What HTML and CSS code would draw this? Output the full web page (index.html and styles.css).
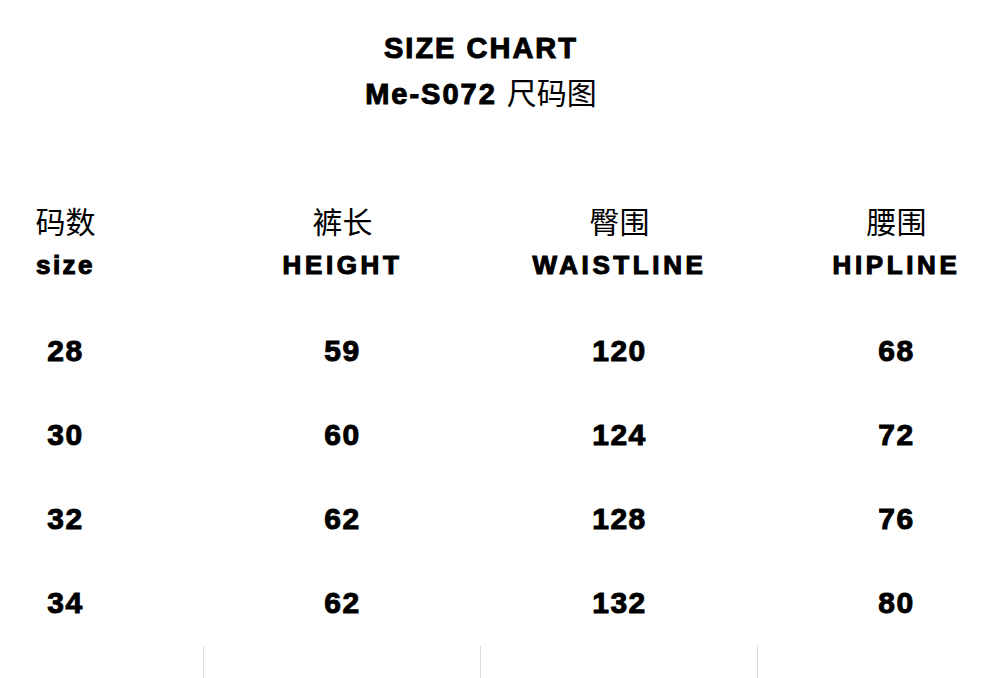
FILE: index.html
```html
<!DOCTYPE html>
<html lang="zh">
<head>
<meta charset="utf-8">
<title>Size Chart</title>
<link rel="stylesheet" href="styles.css">
</head>
<body>
<div class="sheet">
  <header class="title">
    <div class="title-line">SIZE CHART</div>
    <div class="title-line second">Me-S072 <span class="cn">尺码图</span></div>
  </header>
  <div class="grid head">
    <div class="cell"><div class="cn-head">码数</div><div class="en-head small">size</div></div>
    <div class="cell"><div class="cn-head">裤长</div><div class="en-head">HEIGHT</div></div>
    <div class="cell"><div class="cn-head">臀围</div><div class="en-head">WAISTLINE</div></div>
    <div class="cell"><div class="cn-head">腰围</div><div class="en-head">HIPLINE</div></div>
  </div>
  <div class="grid row"><div class="cell">28</div><div class="cell">59</div><div class="cell">120</div><div class="cell">68</div></div>
  <div class="grid row"><div class="cell">30</div><div class="cell">60</div><div class="cell">124</div><div class="cell">72</div></div>
  <div class="grid row"><div class="cell">32</div><div class="cell">62</div><div class="cell">128</div><div class="cell">76</div></div>
  <div class="grid row"><div class="cell">34</div><div class="cell">62</div><div class="cell">132</div><div class="cell">80</div></div>
  <div class="grid foot"><div class="cell line"></div><div class="cell line"></div><div class="cell line"></div><div class="cell"></div></div>
</div>
</body>
</html>
```
FILE: styles.css
```css
html, body {
  margin: 0;
  padding: 0;
  background: #fff;
  overflow: hidden;
}
body {
  font-family: "Liberation Sans", Arial, sans-serif;
  color: #000;
  width: 988px;
  height: 678px;
}
.sheet {
  width: 1108px;
  margin-left: -73px;
}
.title {
  padding-top: 25px;
  text-align: center;
  font-weight: bold;
  font-size: 29px;
  line-height: 46px;
  letter-spacing: 2px;
  -webkit-text-stroke: 1px #000;
}
.title-line {
  height: 46px;
}
.cn {
  font-family: "Noto Sans CJK SC", sans-serif;
  font-weight: 400;
  letter-spacing: 0;
  -webkit-text-stroke: 0;
  font-size: 30px;
  line-height: 1;
}
.grid {
  display: grid;
  grid-template-columns: repeat(4, 277px);
  text-align: center;
}
.head {
  margin-top: 81px;
}
.cn-head {
  font-family: "Noto Sans CJK SC", sans-serif;
  font-size: 30px;
  line-height: 44px;
  height: 44px;
  font-weight: 400;
}
.en-head {
  font-size: 26px;
  line-height: 46px;
  height: 46px;
  font-weight: bold;
  letter-spacing: 3.6px;
  -webkit-text-stroke: 1.1px #000;
}
.en-head.small {
  letter-spacing: 2.5px;
}
.row {
  height: 84px;
  line-height: 84px;
  font-size: 30px;
  font-weight: bold;
  letter-spacing: 1.5px;
  -webkit-text-stroke: 1px #000;
}
.head + .row {
  margin-top: 21px;
}
.foot {
  margin-top: 1px;
  height: 40px;
}
.line {
  border-right: 1px solid #dcdcdc;
}
```
